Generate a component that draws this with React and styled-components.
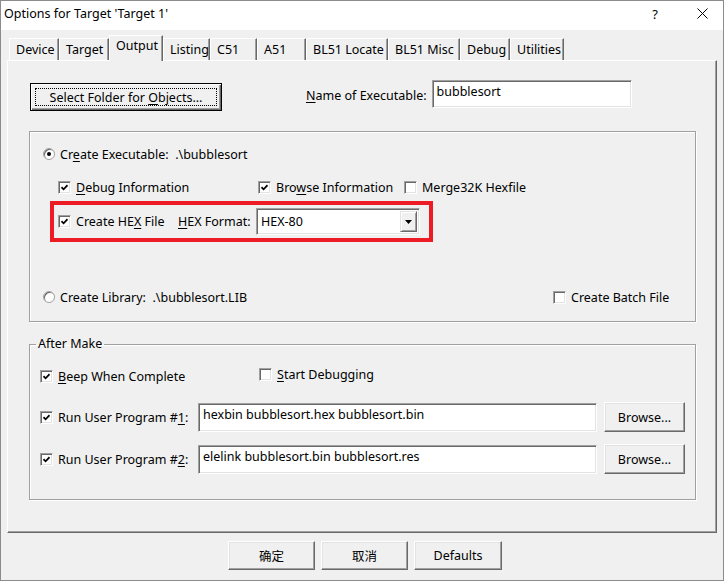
import React from "react";
import styled, { createGlobalStyle } from "styled-components";

const GlobalStyle = createGlobalStyle`
  html, body {
    margin: 0;
    padding: 0;
    background: #f0f0f0;
  }
  body {
    font-family: "Noto Sans", "Noto Sans CJK SC", sans-serif;
    font-size: 12.5px;
    color: #000;
  }
`;

const tabs = [
  { label: "Device", width: 50 },
  { label: "Target", width: 50 },
  { label: "Output", width: 54, active: true },
  { label: "Listing", width: 47 },
  { label: "C51", width: 47 },
  { label: "A51", width: 49 },
  { label: "BL51 Locate", width: 82 },
  { label: "BL51 Misc", width: 72 },
  { label: "Debug", width: 50 },
  { label: "Utilities", width: 54 },
];

const CheckMark = () => (
  <svg width="7" height="7" viewBox="0 0 7 7">
    <path d="M0.5 3.2 L2.6 5.3 L6.5 1.2" stroke="#000" strokeWidth="1.7" fill="none" />
  </svg>
);

const Check = ({ on, children, width, lift }) => (
  <Item $width={width} $lift={lift}>
    <Box>{on && <CheckMark />}</Box>
    <Label>{children}</Label>
  </Item>
);

const Option = ({ on, children, width }) => (
  <Item $width={width}>
    <RadioDot $on={on} />
    <RadioLabel>{children}</RadioLabel>
  </Item>
);

const App = () => {
  return (
    <>
      <GlobalStyle />
      <Window>
        <TitleBar>
          <Title>Options for Target 'Target 1'</Title>
          <TitleHelp>?</TitleHelp>
          <CloseIcon />
        </TitleBar>

        <Body>
          <TabRow>
            {tabs.map((t) => (
              <Tab key={t.label} $width={t.width} $active={t.active}>
                {t.label}
              </Tab>
            ))}
          </TabRow>

          <Panel>
            <TopRow>
              <DefaultButton>
                <FocusRect>
                  <span>
                    Select Folder for <Key>O</Key>bjects...
                  </span>
                </FocusRect>
              </DefaultButton>
              <FieldLabel>
                <Key>N</Key>ame of Executable:
              </FieldLabel>
              <TextBox $width={200} $height={28}>bubblesort</TextBox>
            </TopRow>

            <GroupBox>
              <Row $top={15} $left={13}>
                <Option on>
                  Cr<Key>e</Key>ate Executable:&nbsp; .\bubblesort
                </Option>
              </Row>
              <Row $top={19} $left={28}>
                <Check on width={200}>
                  <Key>D</Key>ebug Information
                </Check>
                <Check on width={146}>
                  Bro<Key>w</Key>se Information
                </Check>
                <Check>Merge32K Hexfile</Check>
              </Row>
              <Highlight>
                <Check on width={120}>
                  Create HE<Key>X</Key> File
                </Check>
                <FieldLabel>
                  <Key>H</Key>EX Format:
                </FieldLabel>
                <Combo>
                  <ComboText>HEX-80</ComboText>
                  <ComboArrow>
                    <svg width="7" height="4" viewBox="0 0 7 4">
                      <path d="M0 0 H7 L3.5 4 Z" fill="#000" />
                    </svg>
                  </ComboArrow>
                </Combo>
              </Highlight>
              <Row $top={48} $left={13}>
                <Option width={510}>Create Library:&nbsp; .\bubblesort.LIB</Option>
                <Check>Create Batch File</Check>
              </Row>
            </GroupBox>

            <FieldSet>
              <Legend>After Make</Legend>
              <Row $top={17} $left={10}>
                <Check on width={219}>
                  <Key>B</Key>eep When Complete
                </Check>
                <Check lift={4}>
                  <Key>S</Key>tart Debugging
                </Check>
              </Row>
              <ProgramRow $top={19}>
                <Check on width={158}>
                  Run User Program #<Key>1</Key>:
                </Check>
                <TextBox $width={399} $height={29}>
                  hexbin bubblesort.hex bubblesort.bin
                </TextBox>
                <Button $width={81} $height={30}>
                  Browse...
                </Button>
              </ProgramRow>
              <ProgramRow $top={12}>
                <Check on width={158}>
                  Run User Program #<Key>2</Key>:
                </Check>
                <TextBox $width={399} $height={29}>
                  elelink bubblesort.bin bubblesort.res
                </TextBox>
                <Button $width={81} $height={30}>
                  Browse...
                </Button>
              </ProgramRow>
            </FieldSet>
          </Panel>

          <ButtonRow>
            <Button $width={87} $height={29}>确定</Button>
            <Button $width={87} $height={29}>取消</Button>
            <Button $width={88} $height={29}>Defaults</Button>
          </ButtonRow>
        </Body>
      </Window>
    </>
  );
};

const CloseIcon = () => (
  <CloseWrap>
    <svg width="11" height="11" viewBox="0 0 11 11">
      <path d="M0.5 0.5 L10.5 10.5 M10.5 0.5 L0.5 10.5" stroke="#000" strokeWidth="1" />
    </svg>
  </CloseWrap>
);

const Window = styled.div`
  width: 724px;
  height: 581px;
  box-sizing: border-box;
  border: 1px solid #8c8c8c;
  background: #f0f0f0;
  display: flex;
  flex-direction: column;
  overflow: hidden;
`;

const TitleBar = styled.div`
  height: 29px;
  background: #fff;
  display: flex;
  align-items: center;
  padding: 0 0 4px 3px;
  box-sizing: border-box;
  flex: none;
`;

const Title = styled.div`
  flex: 1;
`;

const TitleHelp = styled.div`
  font-size: 13px;
  margin-right: 39px;
`;

const CloseWrap = styled.div`
  display: flex;
  margin-right: 15px;
`;

const Body = styled.div`
  padding: 5px 0 0 6px;
  display: flex;
  flex-direction: column;
`;

const TabRow = styled.div`
  display: flex;
  align-items: flex-end;
  height: 25px;
  margin-left: 2px;
`;

const Tab = styled.div`
  position: relative;
  z-index: ${({ $active }) => ($active ? 1 : 0)};
  width: ${({ $width }) => $width}px;
  height: ${({ $active }) => ($active ? 26 : 22)}px;
  margin-bottom: ${({ $active }) => ($active ? -1 : 0)}px;
  box-sizing: border-box;
  background: #f0f0f0;
  border-top: 1px solid #fff;
  border-left: 1px solid #fff;
  border-right: 1px solid #696969;
  box-shadow: inset -1px 0 0 #a0a0a0;
  padding: ${({ $active }) => ($active ? "2px 0 0 6px" : "3px 0 0 6px")};
  line-height: 16px;
  white-space: nowrap;
`;

const Panel = styled.div`
  width: 710px;
  height: 473px;
  box-sizing: border-box;
  border-top: 1px solid #fff;
  border-left: 1px solid #fff;
  border-right: 1px solid #696969;
  border-bottom: 1px solid #696969;
  box-shadow: inset -1px -1px 0 #a0a0a0;
  display: flex;
  flex-direction: column;
  padding-left: 21px;
`;

const TopRow = styled.div`
  display: flex;
  align-items: flex-start;
  margin-top: 19px;
`;

const Button = styled.div`
  width: ${({ $width }) => $width}px;
  height: ${({ $height }) => $height}px;
  box-sizing: border-box;
  background: #f0f0f0;
  border: 1px solid;
  border-color: #fff #696969 #696969 #fff;
  box-shadow: inset -1px -1px 0 #a0a0a0, inset 1px 1px 0 #e3e3e3;
  display: flex;
  align-items: center;
  justify-content: center;
  flex: none;
  white-space: nowrap;
`;

const DefaultButton = styled.div`
  width: 192px;
  height: 28px;
  margin: 3px 84px 0 1px;
  box-sizing: border-box;
  border: 1px solid #000;
  background: #f0f0f0;
  box-shadow: inset 1px 1px 0 #fff, inset -1px -1px 0 #696969, inset -2px -2px 0 #a0a0a0;
  padding: 4px;
  display: flex;
`;

const FocusRect = styled.div`
  flex: 1;
  border: 1px dotted #000;
  display: flex;
  align-items: center;
  justify-content: center;
  white-space: nowrap;
`;

const Key = styled.span`
  text-decoration: underline;
  text-underline-offset: 2px;
`;

const FieldLabel = styled.div`
  white-space: nowrap;
  margin-top: 7px;
  margin-right: 5px;
`;

const TextBox = styled.div`
  width: ${({ $width }) => $width}px;
  height: ${({ $height }) => $height}px;
  box-sizing: border-box;
  background: #fff;
  border: 1px solid;
  border-color: #a0a0a0 #fff #fff #a0a0a0;
  box-shadow: inset 1px 1px 0 #696969, inset -1px -1px 0 #e3e3e3;
  padding: 2px 4px;
  white-space: nowrap;
  flex: none;
`;

const GroupBox = styled.div`
  width: 667px;
  height: 191px;
  margin-top: 20px;
  box-sizing: border-box;
  border: 1px solid #a0a0a0;
  box-shadow: inset 1px 1px 0 #fff, 1px 1px 0 #fff;
  display: flex;
  flex-direction: column;
`;

const Row = styled.div`
  display: flex;
  align-items: center;
  height: 14px;
  margin-top: ${({ $top }) => $top}px;
  padding-left: ${({ $left }) => $left}px;
`;

const Item = styled.div`
  display: flex;
  align-items: center;
  width: ${({ $width }) => ($width ? `${$width}px` : "auto")};
  flex: none;
  position: relative;
  top: ${({ $lift }) => ($lift ? -$lift / 2 : 0)}px;
`;

const Box = styled.span`
  width: 13px;
  height: 13px;
  box-sizing: border-box;
  background: #fff;
  border: 1px solid;
  border-color: #a0a0a0 #fff #fff #a0a0a0;
  box-shadow: inset 1px 1px 0 #696969, inset -1px -1px 0 #e3e3e3;
  display: flex;
  align-items: center;
  justify-content: center;
  flex: none;
`;

const Label = styled.span`
  margin-left: 5px;
  white-space: nowrap;
`;

const RadioDot = styled.span`
  width: 12px;
  height: 12px;
  box-sizing: border-box;
  border-radius: 50%;
  border: 1px solid #a0a0a0;
  background: #fff;
  box-shadow: inset 1px 1px 0 #696969;
  display: flex;
  align-items: center;
  justify-content: center;
  flex: none;

  &::after {
    content: "";
    width: 4px;
    height: 4px;
    border-radius: 50%;
    background: #000;
    display: ${({ $on }) => ($on ? "block" : "none")};
  }
`;

const RadioLabel = styled.span`
  margin-left: 5px;
  white-space: nowrap;
`;

const Highlight = styled.div`
  width: 383px;
  height: 41px;
  margin: 7px 0 0 20px;
  box-sizing: border-box;
  border: 4px solid #ed1c24;
  display: flex;
  align-items: center;
  padding: 0 9px 0 4px;

  ${FieldLabel} {
    margin: 0;
  }
`;

const Combo = styled.div`
  width: 164px;
  height: 27px;
  margin-left: auto;
  box-sizing: border-box;
  background: #fff;
  border: 1px solid;
  border-color: #a0a0a0 #fff #fff #a0a0a0;
  box-shadow: inset 1px 1px 0 #696969, inset -1px -1px 0 #e3e3e3;
  display: flex;
  padding: 2px;
`;

const ComboText = styled.div`
  flex: 1;
  padding: 2px 0 0 2px;
`;

const ComboArrow = styled.div`
  width: 17px;
  box-sizing: border-box;
  background: #f0f0f0;
  border: 1px solid;
  border-color: #e3e3e3 #696969 #696969 #e3e3e3;
  box-shadow: inset 1px 1px 0 #fff, inset -1px -1px 0 #a0a0a0;
  display: flex;
  align-items: center;
  justify-content: center;
`;

const FieldSet = styled.fieldset`
  width: 667px;
  height: 164px;
  margin: 14px 0 0;
  padding: 0;
  min-width: 0;
  box-sizing: border-box;
  border: 1px solid #a0a0a0;
  box-shadow: inset 1px 1px 0 #fff, 1px 1px 0 #fff;
  display: flex;
  flex-direction: column;
`;

const Legend = styled.legend`
  margin-left: 6px;
  padding: 0 2px;
  line-height: 16px;
`;

const ProgramRow = styled.div`
  display: flex;
  align-items: center;
  height: 30px;
  margin-top: ${({ $top }) => $top}px;
  padding-left: 10px;

  ${Button} {
    margin-left: 7px;
  }
`;

const ButtonRow = styled.div`
  display: flex;
  gap: 6px;
  margin-top: 8px;
  padding-left: 221px;
`;

export default App;
